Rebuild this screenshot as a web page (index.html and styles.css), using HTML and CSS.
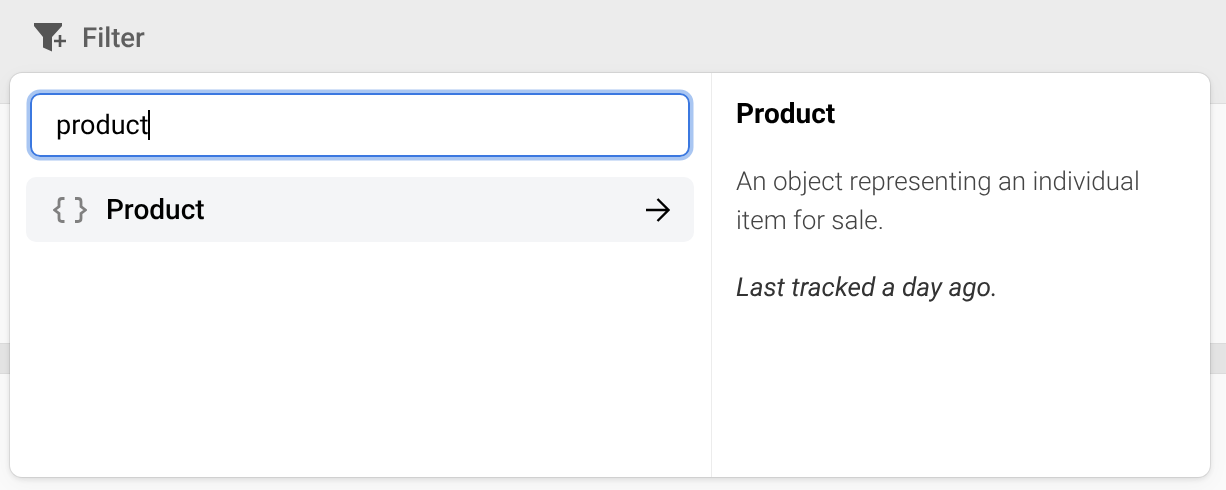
FILE: index.html
```html
<!DOCTYPE html>
<html lang="en">
<head>
    <meta charset="UTF-8">
    <title>Filter</title>
    <link rel="stylesheet" href="styles.css">
</head>
<body>
    <div class="page">
        <div class="toolbar">
            <svg class="filter-icon" width="36" height="32" viewBox="0 0 36 32">
                <path fill="#555" d="M0 1h28v3L18 15V29.500l-9-4V15L0 4z"/>
                <path fill="none" stroke="#555" stroke-width="2.600" d="M20 19h12M26 13v12"/>
            </svg>
            <span class="toolbar-label">Filter</span>
        </div>
        <div class="body-top"></div>
        <div class="band"></div>
        <div class="body-bottom"></div>
    </div>

    <div class="popover">
        <div class="popover-left">
            <div class="search-box">
                <span class="search-text">product</span><span class="caret"></span>
            </div>
            <div class="result-row">
                <svg class="braces" width="34" height="26" viewBox="0 0 34 26">
                    <path fill="none" stroke="#808080" stroke-width="2.800" d="M11.500 1.500H9Q6 1.500 6 4.500V9.500L1.500 13L6 16.500V21.500Q6 24.500 9 24.500H11.500"/>
                    <path fill="none" stroke="#808080" stroke-width="2.800" d="M22 1.500H25Q28 1.500 28 4.500V9.500L32.500 13L28 16.500V21.500Q28 24.500 25 24.500H22"/>
                </svg>
                <span class="result-name">Product</span>
                <svg class="arrow" width="26" height="26" viewBox="0 0 26 26">
                    <path fill="none" stroke="#000" stroke-width="2.400" d="M2 13H24M13.500 2L24.500 13L13.500 24"/>
                </svg>
            </div>
        </div>
        <div class="popover-right">
            <h3 class="detail-title">Product</h3>
            <p class="detail-text">An object representing an individual item for sale.</p>
            <p class="detail-meta">Last tracked a day ago.</p>
        </div>
    </div>
</body>
</html>
```

FILE: styles.css
```css
html, body {
    margin: 0;
    height: 100%;
    overflow: hidden;
}

body {
    font-family: Roboto, "Liberation Sans", sans-serif;
    text-rendering: geometricPrecision;
    background: #fff;
}

.page {
    display: flex;
    flex-direction: column;
    height: 490px;
}

.toolbar {
    display: flex;
    align-items: flex-start;
    gap: 12px;
    height: 104px;
    padding: 22px 0 0 34px;
    box-sizing: border-box;
    background: #ececec;
    border-bottom: 1px solid #dedede;
}

.filter-icon {
    flex: none;
}

.toolbar-label {
    font-size: 27.5px;
    font-weight: 500;
    line-height: 32px;
    color: #5f5f5f;
    will-change: transform;
}

.body-top {
    height: 239px;
    background: #fafafa;
}

.band {
    height: 29px;
    background: #e5e5e5;
    border-top: 1px solid #dcdcdc;
    border-bottom: 1px solid #dcdcdc;
}

.body-bottom {
    flex: 1;
    background: #fafafa;
}

/* popover sits over the page */
.popover {
    position: absolute;
    left: 10px;
    top: 73px;
    width: 1200px;
    height: 404px;
    display: flex;
    background: #fff;
    border-radius: 12px;
    box-shadow: 0 0 0 1px rgba(0, 0, 0, 0.08), 0 2px 6px rgba(0, 0, 0, 0.12), 0 6px 24px rgba(0, 0, 0, 0.04);
    will-change: transform;
}

.popover-left {
    width: 702px;
    box-sizing: border-box;
    padding: 20px 17px 0 16px;
    border-right: 1px solid #ececec;
}

.popover-right {
    flex: 1;
    padding: 22px 24px 0;
}

.search-box {
    display: flex;
    align-items: center;
    height: 64px;
    box-sizing: border-box;
    margin: 0 4px;
    padding-left: 24px;
    border: 2px solid #3b78e0;
    border-radius: 10px;
    box-shadow: 0 0 0 3.5px #a9c6f2;
}

.search-text {
    font-size: 27px;
    color: #000;
}

.caret {
    width: 2px;
    height: 30px;
    margin-left: -1px;
    background: #000;
}

.result-row {
    display: flex;
    align-items: center;
    height: 65px;
    margin-top: 20px;
    padding: 0 24px 0 27px;
    background: #f4f5f7;
    border-radius: 10px;
}

.braces {
    flex: none;
}

.result-name {
    flex: 1;
    margin-left: 19px;
    font-size: 28px;
    font-weight: 500;
    color: #000;
}

.arrow {
    flex: none;
}

.detail-title {
    margin: 2px 0 0;
    font-size: 28px;
    font-weight: 700;
    line-height: 34px;
    color: #000;
}

.detail-text {
    margin: 32px 0 0;
    font-size: 26px;
    font-weight: 300;
    line-height: 39px;
    color: #444;
}

.detail-meta {
    margin: 28px 0 0;
    font-size: 26.2px;
    font-weight: 400;
    font-style: italic;
    line-height: 39px;
    color: #333;
}
```
